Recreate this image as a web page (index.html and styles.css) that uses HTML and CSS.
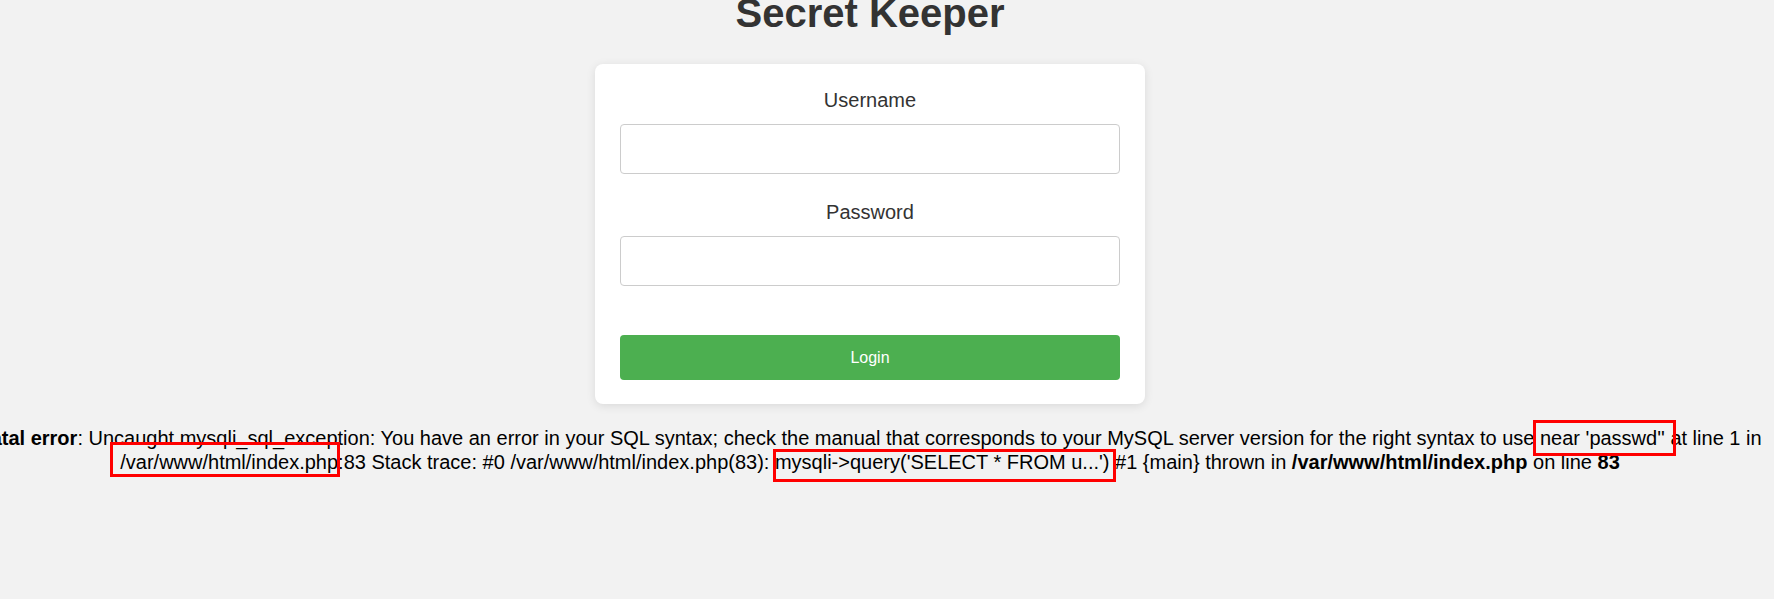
FILE: index.html
```html
<!DOCTYPE html>
<html lang="en">
<head>
<meta charset="utf-8">
<title>Secret Keeper</title>
<link rel="stylesheet" href="styles.css">
</head>
<body>
<div class="page">
  <h1 class="title">Secret Keeper</h1>
  <form class="card">
    <label class="field-label" for="username">Username</label>
    <input class="field-input" type="text" id="username" name="username">
    <label class="field-label" for="password">Password</label>
    <input class="field-input field-input--last" type="password" id="password" name="password">
    <button class="login-btn" type="button">Login</button>
  </form>
  <div class="error">
    <b>Fatal error</b>: Uncaught mysqli_sql_exception: You have an error in your SQL syntax; check the manual that corresponds to your MySQL server version for the right syntax to use near 'passwd'' at line 1 in /var/www/html/index.php:83 Stack trace: #0 /var/www/html/index.php(83): mysqli-&gt;query('SELECT * FROM u...') #1 {main} thrown in <b>/var/www/html/index.php</b> on line <b>83</b>
  </div>
</div>
<div class="mark mark--a"></div>
<div class="mark mark--b"></div>
<div class="mark mark--c"></div>
</body>
</html>
```
FILE: styles.css
```css
html {
  overflow: hidden;
}
body {
  margin: 0;
  background: #f2f2f2;
  font-family: "Liberation Sans", Arial, sans-serif;
  width: 1774px;
  height: 599px;
  position: relative;
  overflow: hidden;
}
.page {
  width: 1740px;
  display: flex;
  flex-direction: column;
  align-items: center;
}
.title {
  margin: -9px 0 28px;
  font-size: 40px;
  font-weight: bold;
  color: #333;
  line-height: normal;
}
.card {
  width: 500px;
  padding: 25px 25px 24px;
  background: #fff;
  border-radius: 8px;
  box-shadow: 0 2px 10px rgba(0, 0, 0, 0.1);
  display: flex;
  flex-direction: column;
}
.field-label {
  display: block;
  text-align: center;
  font-size: 20px;
  color: #333;
  margin-bottom: 12px;
}
.field-input {
  box-sizing: border-box;
  width: 100%;
  height: 50px;
  margin: 0 0 27px;
  border: 1px solid #ccc;
  border-radius: 4px;
  background: #fff;
  font-size: 16px;
  font-family: inherit;
  padding: 0 15px;
}
.field-input--last {
  margin-bottom: 49px;
}
.login-btn {
  height: 45px;
  border: none;
  border-radius: 4px;
  background: #4caf50;
  color: #fff;
  font-family: inherit;
  font-size: 16px;
  padding: 0;
}
.error {
  width: 1800px;
  margin-top: 22px;
  text-align: center;
  font-size: 20px;
  line-height: 24px;
  color: #000;
}
.mark {
  position: absolute;
  border: 3px solid #ff0000;
  box-sizing: border-box;
}
.mark--a {
  left: 110px;
  top: 442px;
  width: 230px;
  height: 35px;
}
.mark--b {
  left: 773px;
  top: 449px;
  width: 343px;
  height: 33px;
}
.mark--c {
  left: 1533px;
  top: 420px;
  width: 143px;
  height: 36px;
}
```
